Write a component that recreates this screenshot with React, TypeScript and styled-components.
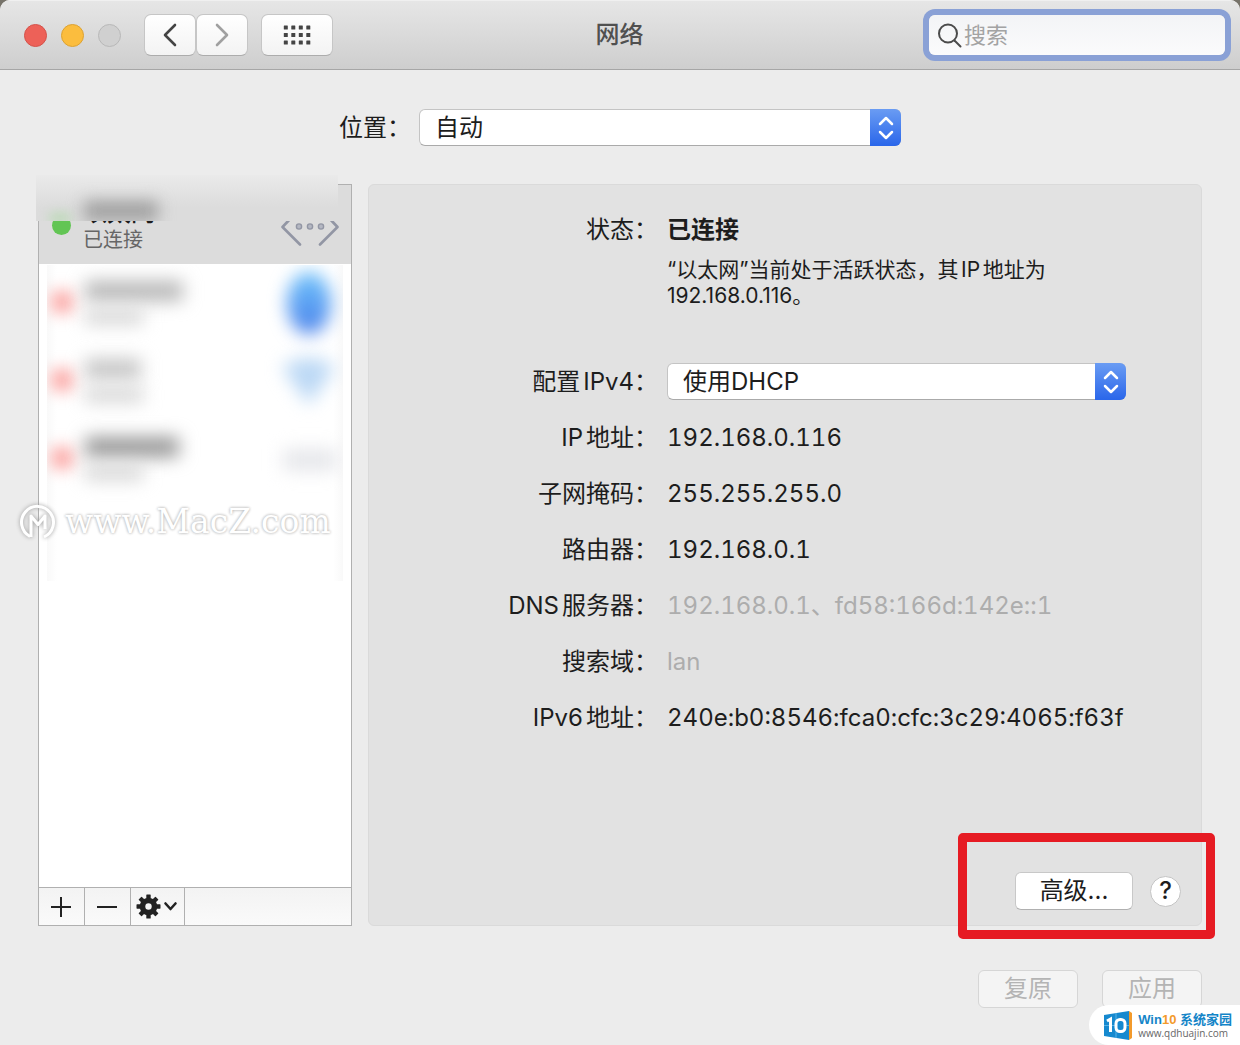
import React from 'react';
import styled, { createGlobalStyle } from 'styled-components';

const GlobalStyle = createGlobalStyle`
  *, *::before, *::after { box-sizing: border-box; }
  body {
    margin: 0;
    background: #77736a;
    color: #1d1d1d;
    font-family: Inter, "Noto Sans CJK SC", sans-serif;
    font-size: 24px;
    line-height: 32px;
    text-autospace: normal;
  }
  button, input, select { font: inherit; color: inherit; text-autospace: inherit; }
  dl, dt, dd, p, h1, ul { margin: 0; padding: 0; font-weight: 400; }
`;

const Window = styled.div`
  position: relative;
  display: flex;
  flex-direction: column;
  min-height: 100vh;
  background: #ececec;
  border-radius: 10px 10px 0 0;
  overflow: hidden;
`;

const TitleBar = styled.header`
  display: grid;
  grid-template-columns: 1fr auto 1fr;
  align-items: center;
  height: 70px;
  padding: 0 15px 0 14px;
  background: linear-gradient(#e6e6e6, #cecece);
  border-bottom: 1px solid #a6a6a6;
  border-top: 1px solid #f0f0f0;
`;

const Title = styled.h1`
  font-size: 24px;
  font-weight: 500;
  color: #505050;
`;

const BarGroup = styled.div`
  display: flex;
  align-items: center;
`;

const Lights = styled.div`
  display: flex;
  gap: 14px;
  padding: 0 23px 0 10px;
`;

const Light = styled.button<{ $fill: string; $edge: string }>`
  width: 23px;
  height: 23px;
  padding: 0;
  border-radius: 50%;
  background: ${p => p.$fill};
  border: 1px solid ${p => p.$edge};
`;

const ToolButton = styled.button<{ $width: number; $gap?: number }>`
  display: flex;
  align-items: center;
  justify-content: center;
  width: ${p => p.$width}px;
  height: 42px;
  margin-left: ${p => p.$gap ?? 0}px;
  padding: 0;
  border: 1px solid #c6c6c6;
  border-bottom-color: #acacac;
  border-radius: 7px;
  background: linear-gradient(#ffffff, #f3f3f3);
`;

const SearchBox = styled.label`
  justify-self: end;
  display: flex;
  align-items: center;
  width: 100%;
  max-width: 296px;
  height: 40px;
  padding: 0 8px;
  gap: 2px;
  border-radius: 6px;
  background: linear-gradient(#f3f4f6, #fbfbfc);
  box-shadow: 0 0 0 6px #8aa1d6;
`;

const SearchInput = styled.input`
  flex: 1;
  min-width: 0;
  height: 36px;
  padding: 0;
  border: 0;
  outline: 0;
  background: transparent;
  font-size: 22px;
  &::placeholder { color: #a3a3a3; opacity: 1; }
`;

const Content = styled.main`
  flex: 1;
  display: flex;
  flex-direction: column;
  padding: 39px 38px 37px;
`;

const LocationRow = styled.div`
  display: flex;
  align-items: center;
  justify-content: center;
  gap: 8px;
`;

const SelectFrame = styled.div<{ $width: number }>`
  position: relative;
  display: flex;
  width: 100%;
  max-width: ${p => p.$width}px;
`;

const SelectControl = styled.select`
  appearance: none;
  width: 100%;
  height: 37px;
  padding: 0 40px 0 15px;
  border: 1px solid #c4c4c4;
  border-bottom-color: #aaaaaa;
  border-radius: 6px;
  background: #ffffff;
`;

const Stepper = styled.span`
  position: absolute;
  top: 0;
  right: 0;
  display: flex;
  align-items: center;
  justify-content: center;
  width: 31px;
  height: 37px;
  border-radius: 0 6px 6px 0;
  background: linear-gradient(#6a9cf3, #2a66ea);
  pointer-events: none;
`;

const Columns = styled.div`
  flex: 1;
  display: flex;
  gap: 16px;
  margin-top: 38px;
`;

const Sidebar = styled.aside`
  position: relative;
  display: flex;
  flex-direction: column;
  flex: 0 0 314px;
  border: 1px solid #b0b0b0;
  background: #ffffff;
`;

const ServiceList = styled.ul`
  flex: 1;
  list-style: none;
`;

const Service = styled.li`
  display: flex;
  align-items: flex-start;
  height: 78px;
  padding: 0 12px 0 13px;
`;

const SelectedService = styled(Service)`
  height: 79px;
  padding-top: 12px;
  background: #dcdcdc;
`;

const StatusDot = styled.span`
  width: 19px;
  height: 19px;
  margin: 19px 12px 0 0;
  border-radius: 50%;
  background: #62c554;
`;

const ServiceText = styled.div`
  flex: 1;
`;

const ServiceName = styled.div`
  font-size: 24px;
  line-height: 32px;
  font-weight: 500;
`;

const ServiceState = styled.div`
  font-size: 20px;
  line-height: 22px;
  color: #666666;
`;

const FrostedStrip = styled.div`
  position: absolute;
  top: -10px;
  left: -3px;
  display: flex;
  align-items: flex-end;
  gap: 14px;
  width: 302px;
  height: 46px;
  padding-left: 14px;
  overflow: hidden;
  background: linear-gradient(#eaeaea, #dcdcdc 70%);
`;

const StripDot = styled.span`
  width: 20px;
  height: 6px;
  background: #a4d79c;
  filter: blur(6px);
`;

const StripName = styled.span`
  width: 74px;
  height: 20px;
  background: #a0a0a0;
  filter: blur(8px);
`;

const FrostedArea = styled.div`
  height: 316px;
  margin: 1px 8px 0;
  overflow: hidden;
  background: linear-gradient(90deg, #f9f9f9, #ffffff 10px, #ffffff calc(100% - 10px), #f9f9f9);
`;

const FrostedService = styled(Service)`
  padding: 0;
`;

const SoftDot = styled.span`
  width: 22px;
  height: 22px;
  margin: 26px 12px 0 4px;
  border-radius: 5px;
  background: #fba7a5;
  filter: blur(8px);
`;

const SoftLine = styled.div<{ $width: number; $height: number; $tone: string; $top: number }>`
  width: ${p => p.$width}px;
  height: ${p => p.$height}px;
  margin-top: ${p => p.$top}px;
  background: ${p => p.$tone};
  filter: blur(9px);
`;

const SoftIcon = styled.svg`
  margin-right: 2px;
  filter: blur(9px);
  overflow: visible;
`;

const SidebarFooter = styled.div`
  display: flex;
  height: 38px;
  border-top: 1px solid #b0b0b0;
  background: linear-gradient(#f3f3f3, #fafafa);
`;

const FooterButton = styled.button<{ $width: number }>`
  display: flex;
  align-items: center;
  justify-content: center;
  gap: 2px;
  width: ${p => p.$width}px;
  padding: 0 4px 0 2px;
  border: 0;
  border-right: 1px solid #b0b0b0;
  background: transparent;
`;

const Panel = styled.section`
  flex: 1;
  min-width: 0;
  display: flex;
  flex-direction: column;
  padding: 26px 20px 15px 0;
  border: 1px solid #dadada;
  border-radius: 6px;
  background: #e2e2e2;
`;

const Details = styled.dl`
  display: flex;
  flex-direction: column;
  gap: 19px;
`;

const Detail = styled.div`
  display: grid;
  grid-template-columns: 289px minmax(0, 1fr);
  column-gap: 9px;
  align-items: center;
  min-height: 37px;
`;

const DetailName = styled.dt`
  text-align: right;
  white-space: nowrap;
`;

const DetailValue = styled.dd<{ $muted?: boolean }>`
  color: ${p => (p.$muted ? '#adadad' : 'inherit')};
  font-variant-numeric: tabular-nums;
  overflow-wrap: anywhere;
`;

const Strong = styled.strong`
  font-weight: 600;
`;

const Notice = styled.p`
  max-width: 720px;
  margin: -10px 0 35px;
  padding-left: 298px;
  font-size: 21px;
  line-height: 26px;
`;

const Actions = styled.div`
  position: relative;
  display: flex;
  align-items: center;
  gap: 17px;
  margin: auto 0 0 auto;
`;

const Highlight = styled.div`
  position: absolute;
  inset: -39px -34px -29px -57px;
  border: 9px solid #e61b23;
  border-radius: 5px;
  pointer-events: none;
`;

const PushButton = styled.button<{ $width: number }>`
  width: ${p => p.$width}px;
  height: 38px;
  padding: 0;
  border: 1px solid #c8c8c8;
  border-bottom-color: #b0b0b0;
  border-radius: 6px;
  background: #ffffff;
  &:disabled {
    color: #b4b4b4;
    background: #f4f4f4;
    border-color: #d6d6d6;
  }
`;

const HelpButton = styled.button`
  width: 31px;
  height: 31px;
  padding: 0;
  border: 1px solid #c4c4c4;
  border-radius: 50%;
  background: #ffffff;
  font-weight: 500;
  line-height: 28px;
`;

const BottomBar = styled.footer`
  display: flex;
  justify-content: flex-end;
  gap: 24px;
  margin-top: 44px;
`;

const Watermark = styled.div`
  position: absolute;
  top: 502px;
  left: 19px;
  display: flex;
  align-items: center;
  gap: 8px;
  color: #ffffff;
  font-family: "DejaVu Serif", serif;
  font-size: 33px;
  line-height: 40px;
  text-shadow: 0 0 3px #b4b4b4, 0 0 3px #d0d0d0;
  pointer-events: none;
  svg { filter: drop-shadow(0 0 2px #999999); }
`;

const SiteBadge = styled.a`
  position: absolute;
  right: 0;
  bottom: 0;
  display: flex;
  align-items: center;
  gap: 6px;
  height: 40px;
  padding: 0 8px 0 15px;
  border-radius: 20px 0 0 20px;
  background: #ffffff;
  text-decoration: none;
  color: #1585c8;
`;

const BadgeText = styled.span`
  display: flex;
  flex-direction: column;
`;

const BadgeName = styled.span`
  font-family: "Liberation Sans", "Noto Sans CJK SC", sans-serif;
  font-size: 13px;
  line-height: 16px;
  font-weight: 700;
  white-space: nowrap;
  em { font-style: normal; color: #f39a2b; }
`;

const BadgeUrl = styled.span`
  font-family: "Open Sans", sans-serif;
  font-size: 10px;
  line-height: 11px;
  color: #666666;
`;

const Chevron = ({ d, color }: { d: string; color: string }) => (
  <svg width="14" height="24" viewBox="0 0 14 24" fill="none" stroke={color} strokeWidth="2.6" strokeLinecap="round" strokeLinejoin="round">
    <path d={d} />
  </svg>
);

const GridIcon = () => (
  <svg width="28" height="20" viewBox="0 0 28 20" fill="#444444">
    {[0, 7.5, 15].map(y => [0, 7.5, 15, 22.5].map(x => (
      <rect key={`${x}-${y}`} x={x + 0.8} y={y + 0.5} width="4" height="4" rx="0.5" />
    )))}
  </svg>
);

const SearchIcon = () => (
  <svg width="25" height="26" viewBox="0 0 25 26" fill="none" stroke="#4b4b4b" strokeWidth="2" strokeLinecap="round">
    <circle cx="11" cy="11.5" r="9" />
    <path d="M17.5 18.5 23.5 24.5" />
  </svg>
);

const EthernetIcon = () => (
  <svg width="58" height="58" viewBox="0 0 58 58" fill="none" stroke="#9296a4" strokeWidth="2.6" strokeLinecap="round" strokeLinejoin="round">
    <path d="M19 11.500 1.500 30 19 47.500M39 11.500 56.500 30 39 47.500" />
    <g fill="#b4b7c2" strokeWidth="1.4">
      <circle cx="18" cy="29.5" r="2.6" />
      <circle cx="29" cy="29.5" r="2.6" />
      <circle cx="40" cy="29.5" r="2.6" />
    </g>
  </svg>
);

const GearIcon = () => (
  <svg width="25" height="25" viewBox="-12.5 -12.5 25 25" fill="#222222">
    {[0, 45, 90, 135].map(a => (
      <rect key={a} x="-2.2" y="-12" width="4.4" height="24" rx="0.6" transform={`rotate(${a})`} />
    ))}
    <circle r="8.8" />
    <circle r="3.2" fill="#f6f6f6" />
  </svg>
);

const MacZLogo = () => (
  <svg width="38" height="38" viewBox="0 0 38 38" fill="none" stroke="#ffffff" strokeWidth="3">
    <path d="M11 33.5A16 16 0 1 1 25 34" />
    <path d="M12 34V13L19 21.500 26 13V26" strokeLinejoin="round" />
  </svg>
);

const TenLogo = () => (
  <svg width="28" height="29" viewBox="0 0 28 29">
    <path d="M0 4 25 0V29L0 25Z" fill="#1689cf" />
    <path d="M25 0 28 2V27L25 29Z" fill="#f39a2b" />
    <path d="M0 14.500H25M12 2V27" stroke="#56b4e8" strokeWidth="1" />
    <path d="M3 10 6.500 8V21" fill="none" stroke="#ffffff" strokeWidth="3" />
    <rect x="12" y="8.500" width="9" height="12" rx="4" fill="#1689cf" stroke="#ffffff" strokeWidth="3" />
  </svg>
);

interface PopupProps { id: string; width: number; value: string; }

const Popup = ({ id, width, value }: PopupProps) => (
  <SelectFrame $width={width}>
    <SelectControl id={id} defaultValue={value}>
      <option value={value}>{value}</option>
    </SelectControl>
    <Stepper>
      <svg width="16" height="24" viewBox="0 0 16 24" fill="none" stroke="#ffffff" strokeWidth="2.500" strokeLinecap="round" strokeLinejoin="round">
        <path d="M2 8 8 2 14 8M2 16 8 22 14 16" />
      </svg>
    </Stepper>
  </SelectFrame>
);

const details = [
  { name: 'IP地址：', value: '192.168.0.116' },
  { name: '子网掩码：', value: '255.255.255.0' },
  { name: '路由器：', value: '192.168.0.1' },
  { name: 'DNS服务器：', value: '192.168.0.1、fd58:166d:142e::1', muted: true },
  { name: '搜索域：', value: 'lan', muted: true },
  { name: 'IPv6地址：', value: '240e:b0:8546:fca0:cfc:3c29:4065:f63f' },
];

const hiddenServices = [
  {
    width: 98, tone: '#b6b6b6',
    icon: (
      <SoftIcon width="64" height="78" viewBox="0 0 64 78">
        <defs>
          <linearGradient id="blue" x1="0" y1="0" x2="0" y2="1">
            <stop offset="0" stopColor="#6fc3fb" />
            <stop offset="1" stopColor="#4a80ea" />
          </linearGradient>
        </defs>
        <ellipse cx="32" cy="38" rx="22" ry="31" fill="url(#blue)" />
      </SoftIcon>
    ),
  },
  {
    width: 56, tone: '#c4c4c4',
    icon: (
      <SoftIcon width="64" height="78" viewBox="0 0 64 78">
        <path d="M5 24Q32 6 58 24L32 62Z" fill="#bbd8f5" />
      </SoftIcon>
    ),
  },
  {
    width: 94, tone: '#969696',
    icon: (
      <SoftIcon width="64" height="78" viewBox="0 0 64 78">
        <rect x="6" y="28" width="54" height="22" fill="#e6e7eb" />
      </SoftIcon>
    ),
  },
];

export default function App() {
  return (
    <>
      <GlobalStyle />
      <Window>
        <TitleBar>
          <BarGroup>
            <Lights>
              <Light aria-label="关闭" $fill="#ed6158" $edge="#d4524a" />
              <Light aria-label="最小化" $fill="#fbbd3e" $edge="#dca233" />
              <Light aria-label="缩放" $fill="#d0d0d0" $edge="#b8b8b8" />
            </Lights>
            <ToolButton aria-label="后退" $width={52}>
              <Chevron d="M12 2 2 12 12 22" color="#444444" />
            </ToolButton>
            <ToolButton aria-label="前进" $width={52}>
              <Chevron d="M2 2 12 12 2 22" color="#a0a0a0" />
            </ToolButton>
            <ToolButton aria-label="显示全部" $width={72} $gap={13}>
              <GridIcon />
            </ToolButton>
          </BarGroup>
          <Title>网络</Title>
          <SearchBox>
            <SearchIcon />
            <SearchInput type="search" placeholder="搜索" aria-label="搜索" />
          </SearchBox>
        </TitleBar>

        <Content>
          <LocationRow>
            <label htmlFor="location">位置：</label>
            <Popup id="location" width={482} value="自动" />
          </LocationRow>

          <Columns>
            <Sidebar>
              <ServiceList>
                <SelectedService>
                  <StatusDot />
                  <ServiceText>
                    <ServiceName>以太网</ServiceName>
                    <ServiceState>已连接</ServiceState>
                  </ServiceText>
                  <EthernetIcon />
                </SelectedService>
                <li>
                  <FrostedArea>
                    {hiddenServices.map(s => (
                      <FrostedService as="div" key={s.width}>
                        <SoftDot />
                        <ServiceText>
                          <SoftLine $width={s.width} $height={20} $tone={s.tone} $top={16} />
                          <SoftLine $width={58} $height={14} $tone="#d2d2d2" $top={9} />
                        </ServiceText>
                        {s.icon}
                      </FrostedService>
                    ))}
                  </FrostedArea>
                </li>
              </ServiceList>
              <SidebarFooter>
                <FooterButton aria-label="添加" $width={46}>
                  <svg width="22" height="22" viewBox="0 0 22 22" stroke="#222222" strokeWidth="2"><path d="M1 11H21M11 1V21" /></svg>
                </FooterButton>
                <FooterButton aria-label="移除" $width={46}>
                  <svg width="22" height="22" viewBox="0 0 22 22" stroke="#222222" strokeWidth="2"><path d="M1 11H21" /></svg>
                </FooterButton>
                <FooterButton aria-label="操作" $width={54}>
                  <GearIcon />
                  <svg width="15" height="12" viewBox="0 0 15 12" fill="none" stroke="#222222" strokeWidth="2.600" strokeLinecap="round" strokeLinejoin="round"><path d="M2.500 2.500 7.500 8 12.500 2.500" /></svg>
                </FooterButton>
              </SidebarFooter>
              <FrostedStrip>
                <StripDot />
                <StripName />
              </FrostedStrip>
            </Sidebar>

            <Panel>
              <Details>
                <Detail>
                  <DetailName>状态：</DetailName>
                  <DetailValue><Strong>已连接</Strong></DetailValue>
                </Detail>
                <Notice>“以太网”当前处于活跃状态，其IP地址为 192.168.0.116。</Notice>
                <Detail>
                  <DetailName><label htmlFor="ipv4">配置IPv4：</label></DetailName>
                  <DetailValue><Popup id="ipv4" width={459} value="使用DHCP" /></DetailValue>
                </Detail>
                {details.map(d => (
                  <Detail key={d.name}>
                    <DetailName>{d.name}</DetailName>
                    <DetailValue $muted={d.muted}>{d.value}</DetailValue>
                  </Detail>
                ))}
              </Details>
              <Actions>
                <PushButton $width={118}>高级...</PushButton>
                <HelpButton aria-label="帮助">?</HelpButton>
                <Highlight />
              </Actions>
            </Panel>
          </Columns>

          <BottomBar>
            <PushButton $width={100} disabled>复原</PushButton>
            <PushButton $width={100} disabled>应用</PushButton>
          </BottomBar>
        </Content>

        <Watermark>
          <MacZLogo />
          <span>www.MacZ.com</span>
        </Watermark>

        <SiteBadge href="#">
          <TenLogo />
          <BadgeText>
            <BadgeName>Win<em>10</em> 系统家园</BadgeName>
            <BadgeUrl>www.qdhuajin.com</BadgeUrl>
          </BadgeText>
        </SiteBadge>
      </Window>
    </>
  );
}
